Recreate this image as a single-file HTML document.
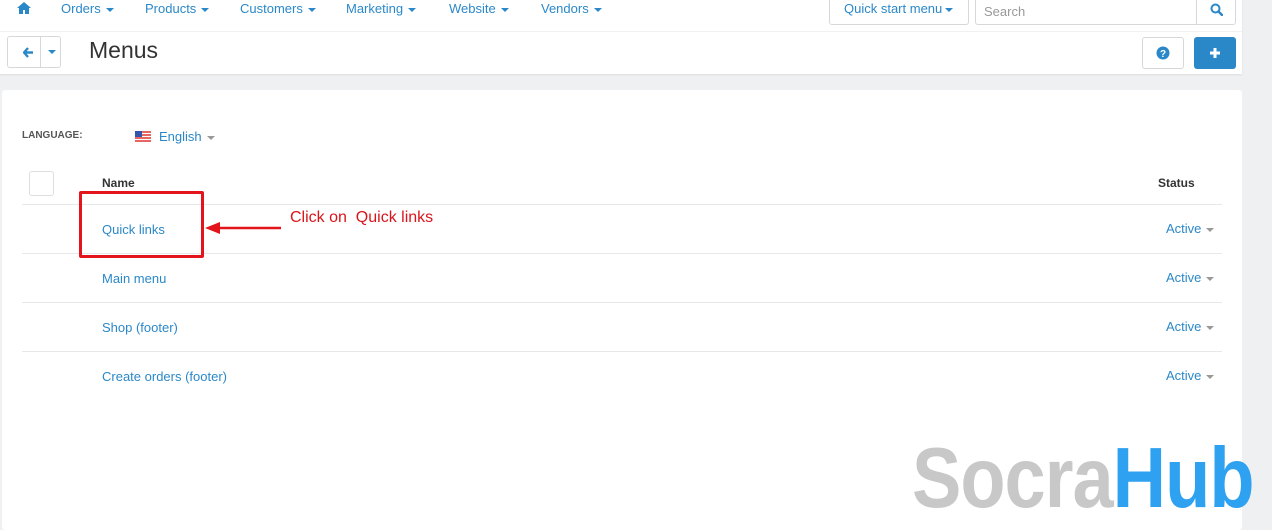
<!DOCTYPE html>
<html><head><style>
*{box-sizing:border-box;margin:0;padding:0}
body{width:1272px;height:517px;overflow:hidden;background:#eef0f2;font-family:"Liberation Sans","DejaVu Sans",sans-serif;position:relative}
.top{position:absolute;left:0;top:0;width:1242px;height:74px;background:#fff;box-shadow:0 1px 2px rgba(0,0,0,.08)}
.nav{position:absolute;top:1px;font-size:13px;color:#2b88c8}
.car{display:inline-block;width:0;height:0;border-left:4px solid transparent;border-right:4px solid transparent;border-top:4px solid #2b88c8;vertical-align:middle;margin-left:5px}
.btn{position:absolute;border:1px solid #d6d8da;border-radius:3px;background:#fff}
.panel{position:absolute;left:2px;top:90px;width:1240px;height:440px;background:#fff;border-radius:3px}
.a{color:#2b88c8;font-size:13px;position:absolute}
.line{position:absolute;left:22px;width:1200px;height:1px;background:#e6e8ea}
.st{position:absolute;left:1166px;font-size:13px;color:#2b88c8}
.st:after{content:"";display:inline-block;border-left:4px solid transparent;border-right:4px solid transparent;border-top:4px solid #999;vertical-align:middle;margin-left:5px}
</style></head><body>
<div class="top">
<svg style="position:absolute;left:17px;top:2px" width="14" height="12" viewBox="0 0 14 12"><path d="M7 0L0 6h2v6h4V8h2v4h4V6h2z" fill="#2b88c8"/></svg>
<div class="nav" style="left:61px">Orders<span class="car"></span></div>
<div class="nav" style="left:145px">Products<span class="car"></span></div>
<div class="nav" style="left:240px">Customers<span class="car"></span></div>
<div class="nav" style="left:346px">Marketing<span class="car"></span></div>
<div class="nav" style="left:449px">Website<span class="car"></span></div>
<div class="nav" style="left:541px">Vendors<span class="car"></span></div>
<div class="btn" style="left:829px;top:-4px;width:140px;height:29px;border-top:none"><span class="nav" style="left:14px;top:5px">Quick start menu<span class="car" style="margin-left:3px"></span></span></div>
<div class="btn" style="left:975px;top:-4px;width:261px;height:29px"><span style="position:absolute;left:8px;top:7px;font-size:13px;color:#999">Search</span><div style="position:absolute;left:220px;top:0;width:1px;height:28px;background:#d6d8da"></div>
<svg style="position:absolute;left:234px;top:6px" width="13" height="13" viewBox="0 0 13 13"><circle cx="5.5" cy="5.5" r="4" stroke="#2b88c8" stroke-width="2" fill="none"/><path d="M8.5 8.5L12 12" stroke="#2b88c8" stroke-width="2.4" stroke-linecap="round"/></svg></div>
<div style="position:absolute;left:0;top:31px;width:1242px;height:1px;background:#f0f1f2"></div>
<div class="btn" style="left:7px;top:36px;width:54px;height:32px"><div style="position:absolute;left:32px;top:0;width:1px;height:30px;background:#d6d8da"></div>
<svg style="position:absolute;left:15px;top:10px" width="11" height="11" viewBox="0 0 11 11"><path d="M5 1L1 5.5 5 10M1.5 5.5H10" stroke="#2b88c8" stroke-width="2.4" fill="none"/></svg>
<span style="position:absolute;left:40px;top:13px;border-left:4px solid transparent;border-right:4px solid transparent;border-top:4px solid #2b88c8"></span></div>
<div style="position:absolute;left:89px;top:37px;font-size:23px;color:#333">Menus</div>
<div class="btn" style="left:1142px;top:37px;width:42px;height:32px"><svg style="position:absolute;left:13px;top:8px" width="14" height="14" viewBox="0 0 14 14"><circle cx="7" cy="7" r="6.5" fill="#2b88c8"/><text x="7" y="11" font-size="10" font-weight="bold" fill="#fff" text-anchor="middle" font-family="Liberation Sans">?</text></svg></div>
<div style="position:absolute;left:1194px;top:37px;width:42px;height:32px;background:#2b88c8;border-radius:3px"><svg style="position:absolute;left:15px;top:10px" width="12" height="12"><path d="M6 1v10M1 6h10" stroke="#fff" stroke-width="3"/></svg></div>
</div>
<div class="panel"></div>
<div style="position:absolute;left:22px;top:130px;font-size:10px;font-weight:bold;color:#555">LANGUAGE:</div>
<svg style="position:absolute;left:135px;top:131px" width="16" height="11"><rect width="16" height="11" fill="#fff"/><path d="M0 1h16M0 4h16M0 7h16M0 10h16" stroke="#d33" stroke-width="1.4"/><rect width="7" height="6" fill="#3355aa"/></svg>
<div class="a" style="left:159px;top:129px">English<span class="car" style="border-top-color:#999"></span></div>
<div style="position:absolute;left:29px;top:171px;width:25px;height:25px;border:1px solid #dcdee0;border-radius:3px"></div>
<div style="position:absolute;left:102px;top:176px;font-size:12px;font-weight:bold;color:#333">Name</div>
<div style="position:absolute;left:1158px;top:176px;font-size:12px;font-weight:bold;color:#333">Status</div>
<div class="line" style="top:204px"></div><div class="line" style="top:253px"></div><div class="line" style="top:302px"></div><div class="line" style="top:351px"></div>
<div class="a" style="left:102px;top:222px">Quick links</div>
<div class="a" style="left:102px;top:271px">Main menu</div>
<div class="a" style="left:102px;top:320px">Shop (footer)</div>
<div class="a" style="left:102px;top:369px">Create orders (footer)</div>
<div class="st" style="top:221px">Active</div><div class="st" style="top:270px">Active</div><div class="st" style="top:319px">Active</div><div class="st" style="top:368px">Active</div>
<div style="position:absolute;left:79px;top:191px;width:125px;height:67px;border:3px solid #e3141b;border-radius:2px"></div>
<svg style="position:absolute;left:203px;top:219px" width="80" height="18"><path d="M78 9H15" stroke="#e3141b" stroke-width="2.5"/><path d="M2 9L17 3v12z" fill="#e3141b"/></svg>
<div style="position:absolute;left:290px;top:209px;font-size:16px;color:#d9141b;white-space:pre">Click on  Quick links</div>
<div style="position:absolute;left:912px;top:442px;line-height:80px;font-family:'Liberation Sans',sans-serif;font-weight:bold;font-size:74px;letter-spacing:-1px;color:#c8c8c8;white-space:nowrap;transform:scaleY(1.15);transform-origin:0 64px">Socra<span style="color:#2ea1f0">Hub</span></div>
</body></html>
